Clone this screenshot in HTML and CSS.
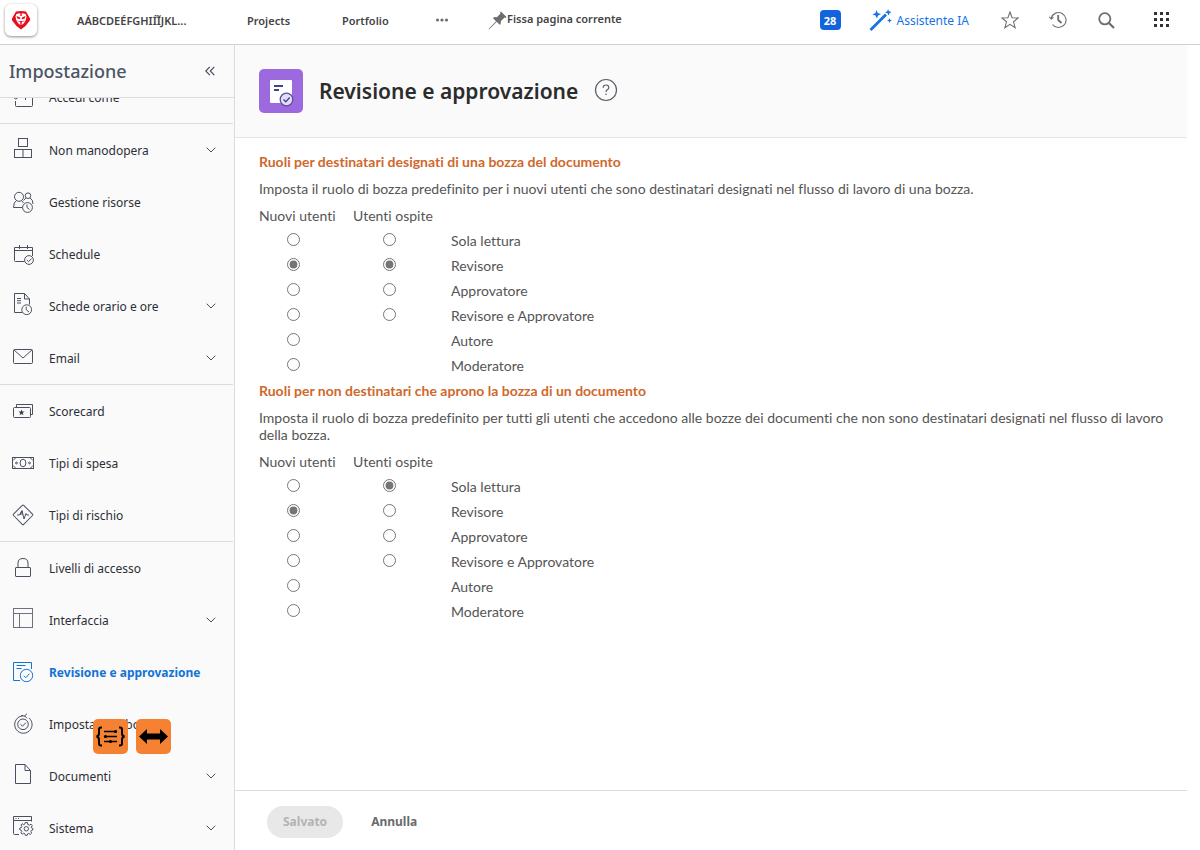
FILE: index.html
```html
<!DOCTYPE html>
<html lang="it">
<head>
<meta charset="utf-8">
<title>Revisione e approvazione</title>
<link rel="stylesheet" href="styles.css">
</head>
<body>
<header class="topbar">
  <a class="logo" href="#" aria-label="Home">
    <svg width="20" height="20" viewBox="0 0 20 20"><path fill="#eb0c22" d="M5 1.5Q10 .3 15 1.5L19 8.500Q19.300 10 18.500 11L14.500 16L10 19.500L5.500 16L1.500 11Q.7 10 1 8.500Z"/><path fill="#fff" d="M5.500 4L8.500 3.300L10 4L11.500 3.300L14.500 4L15.500 6.500L14.800 10L13 13L11.500 14.500H8.500L7 13L5.200 10L4.500 6.500Z"/><path fill="#eb0c22" d="M5.500 6L9.200 7.500V9.300L6.300 8.500ZM14.500 6L10.800 7.500V9.300L13.700 8.500ZM8 11H12L10.700 12.500V14.500H9.300V12.500ZM9.300 3.500H10.700V6H9.300ZM6.500 10L7.500 11V12.500ZM13.500 10L12.500 11V12.500Z"/></svg>
  </a>
  <nav class="topnav" aria-label="Principale">
    <a class="nav-home" href="#">AÁBCDEÉFGHIÍĨJKL...</a>
    <a class="nav-projects" href="#">Projects</a>
    <a class="nav-portfolio" href="#">Portfolio</a>
    <button class="icon-btn nav-more" aria-label="Altro"><svg width="14" height="6" viewBox="0 0 14 6" fill="#6e6e6e"><circle cx="2.500" cy="3" r="1.600"/><circle cx="7" cy="3" r="1.600"/><circle cx="11.500" cy="3" r="1.600"/></svg></button>
    <button class="pin"><svg width="19" height="19" viewBox="0 0 19 19"><path fill="#6e6e6e" d="M13 .5L18.500 6L17.500 7L16.500 6.500L12.800 10.200Q13.300 12.500 12 14L8.700 10.800L1.500 18L.5 18.500L1 17.500L8 10.200L4.800 7Q6.500 5.700 8.800 6.200L12.500 2.500L12 1.500Z"/></svg><span>Fissa pagina corrente</span></button>
  </nav>
  <div class="tools">
    <button class="badge" aria-label="28 notifiche">28</button>
    <button class="assistant"><svg width="23" height="23" viewBox="0 0 23 23" fill="#1473e6"><path d="M.5 20L16 4.500L18 6.500L2.500 22Z"/><path d="M7.500 1L8.700 4L12 5L9 6.500L8 9.500L6.500 6.500L3.500 5.500L6.500 4Z"/><path d="M19 0L20 2.300L22.500 3L20.500 4.200L19.500 6.500L18.500 4.200L16 3.500L18.300 2.300Z"/><path d="M20.500 9L21.200 10.800L23 11.500L21.200 12.200L20.500 14L19.800 12.200L18 11.500L19.800 10.800Z"/></svg><span>Assistente IA</span></button>
    <button class="icon-btn star" aria-label="Preferiti"><svg width="18" height="18" viewBox="0 0 18 18" fill="none" stroke="#6e6e6e" stroke-width="1.100"><path d="M9 1L11.100 6.700L17.200 7L12.500 10.800L14.100 16.700L9 13.400L3.900 16.700L5.500 10.800L.8 7L6.900 6.700Z"/></svg></button>
    <button class="icon-btn recent" aria-label="Recenti"><svg width="18" height="18" viewBox="0 0 18 18" fill="none" stroke="#6e6e6e" stroke-width="1.100"><path d="M2.300 7A7.500 7.500 0 1 1 3.500 13.500"/><path d="M.3 5.800L2.200 8L4.400 6.300" /><path d="M9.200 4V9L12.500 12" stroke-width="1.800"/></svg></button>
    <button class="icon-btn search" aria-label="Cerca"><svg width="17" height="17" viewBox="0 0 17 17" fill="none" stroke="#6e6e6e" stroke-width="1.800"><circle cx="6.800" cy="6.800" r="5.600"/><path d="M11 11L16 16" stroke-width="2.200"/></svg></button>
    <button class="icon-btn apps" aria-label="Applicazioni"><svg width="16" height="16" viewBox="0 0 16 16" fill="#323232"><path d="M0 0h3v3H0zM6 0h3v3H6zM12 0h3v3H12zM0 6h3v3H0zM6 6h3v3H6zM12 6h3v3H12zM0 12h3v3H0zM6 12h3v3H6zM12 12h3v3H12z"/></svg></button>
  </div>
</header>

<div class="layout">
  <aside class="sidebar">
    <div class="side-head">
      <h2>Impostazione</h2>
      <button class="icon-btn" aria-label="Comprimi"><svg width="10" height="10" viewBox="0 0 10 10" fill="none" stroke="#4b5060" stroke-width="1.200"><path d="M4.800 .8L.8 5L4.800 9.200M9.300 .8L5.300 5L9.300 9.200"/></svg></button>
    </div>
    <nav class="side-list" aria-label="Impostazione">
      <div class="group group-scrolled">
        <a class="item" href="#"><svg class="ico" viewBox="0 0 24 24"><path d="M4.500 18V22.500Q4.500 23.500 5.500 23.500H20.500Q21.500 23.500 21.500 22.500V14H16M2.500 14Q4.500 18 7.500 14M14.500 14V17"/></svg><span>Accedi come</span></a>
      </div>
      <div class="group">
        <a class="item" href="#"><svg class="ico" viewBox="0 0 24 24"><rect x="7.500" y="2.500" width="9" height="8"/><rect x="3.500" y="13.500" width="17" height="8"/><path d="M12 13.500V21.500"/></svg><span>Non manodopera</span><svg class="chev" viewBox="0 0 10 6"><path d="M.7 .7L5 5L9.300 .7"/></svg></a>
        <a class="item" href="#"><svg class="ico" viewBox="0 0 24 24"><circle cx="8" cy="8.800" r="4.500"/><path d="M5.500 12.500Q2.500 14 2.500 19.500H11.200M10.500 12.500L12.500 15"/><circle cx="17" cy="7.700" r="2.800"/><path d="M14.800 10L12.500 12.500M19 10Q22 11.500 22 16"/><circle cx="16.500" cy="19.500" r="4.900"/><path d="M16 16.500V19.500L18.500 21.500"/></svg><span>Gestione risorse</span></a>
        <a class="item" href="#"><svg class="ico" viewBox="0 0 24 24"><path d="M13.500 21.500H4.500Q3.500 21.500 3.500 20.500V7.500H21.500V16M3.500 10.500H21.500M8.500 5V9M16.500 5V9"/><circle cx="18" cy="20" r="4.400"/><path d="M15.800 20L17.500 21.700L20.500 18.600"/></svg><span>Schedule</span></a>
        <a class="item" href="#"><svg class="ico" viewBox="0 0 24 24"><path d="M11 20.500H3.500V1.500H13.500L18.500 7V12.500M13.500 1.500V7H18.500M6 6.500H10M6 8.700H10M6 11H10"/><circle cx="15.700" cy="17.700" r="4.900"/><path d="M15.200 14.700V17.700L18 20"/></svg><span>Schede orario e ore</span><svg class="chev" viewBox="0 0 10 6"><path d="M.7 .7L5 5L9.300 .7"/></svg></a>
        <a class="item" href="#"><svg class="ico" viewBox="0 0 24 24"><rect x="2.500" y="5.500" width="19" height="14" rx="1"/><path d="M3 6L12 14L21 6"/></svg><span>Email</span><svg class="chev" viewBox="0 0 10 6"><path d="M.7 .7L5 5L9.300 .7"/></svg></a>
      </div>
      <div class="group">
        <a class="item" href="#"><svg class="ico" viewBox="0 0 24 24"><rect x="2.500" y="10.500" width="17" height="10" rx="1"/><path d="M5.500 10.500V7.500H21.500V17.500H19.500"/><path fill="#3b4150" stroke="none" d="M10.500 12.500L11.300 14.600H13.500L11.800 16L12.400 18.200L10.500 16.900L8.600 18.200L9.200 16L7.500 14.600H9.700Z"/></svg><span>Scorecard</span></a>
        <a class="item" href="#"><svg class="ico" viewBox="0 0 24 24"><rect x="1.500" y="8.500" width="21" height="11"/><ellipse cx="12" cy="14" rx="2.900" ry="3.800"/><circle cx="5.500" cy="14" r=".9"/><circle cx="18.500" cy="14" r=".9"/><path d="M2 11.500L4.500 9M22 11.500L19.500 9M2 16.500L4.500 19M22 16.500L19.500 19"/></svg><span>Tipi di spesa</span></a>
        <a class="item" href="#"><svg class="ico" viewBox="0 0 24 24"><rect x="4.800" y="6.600" width="14.400" height="14.400" rx="1" transform="rotate(45 12 13.800)"/><path d="M6 14H8.500L11 9.500L13 18L15 12.500L16 14H18M9 14L11 10V14"/></svg><span>Tipi di rischio</span></a>
      </div>
      <div class="group">
        <a class="item" href="#"><svg class="ico" viewBox="0 0 24 24"><rect x="4.500" y="13.500" width="15" height="9" rx=".5"/><path d="M7 13.500V9Q7 4.500 12 4.500Q17 4.500 17 9V13.500"/></svg><span>Livelli di accesso</span></a>
        <a class="item" href="#"><svg class="ico" viewBox="0 0 24 24" stroke-opacity=".8"><rect x="2.500" y="2.500" width="19" height="19"/><path d="M2.500 7.500H21.500M8.500 7.500V21.500"/></svg><span>Interfaccia</span><svg class="chev" viewBox="0 0 10 6"><path d="M.7 .7L5 5L9.300 .7"/></svg></a>
        <a class="item active" href="#" aria-current="page"><svg class="ico" viewBox="0 0 24 24"><path d="M9 22.500H2.500V4.500H20.500V11M5.500 7.500H14.500M5.500 10.500H10.500"/><circle cx="15.500" cy="17.500" r="6.200"/><path d="M12.800 17.700L14.800 19.700L18.500 15.700"/></svg><span>Revisione e approvazione</span></a>
        <a class="item" href="#"><svg class="ico" viewBox="0 0 24 24"><path d="M14 6A8.700 8.700 0 1 0 18 7.900M16 3.700L13.700 5.900L16 8.300M10 5.700L12 5.500"/><circle cx="12" cy="14.300" r="5.300"/><path d="M9.500 14.300L11.500 16.200L14.800 12.700"/></svg><span>Impostazioni bozza</span></a>
        <a class="item" href="#"><svg class="ico" viewBox="0 0 24 24"><path d="M4.500 2.500H14L19.500 8.500V21.500H4.500ZM14 2.500V8.500H19.500"/></svg><span>Documenti</span><svg class="chev" viewBox="0 0 10 6"><path d="M.7 .7L5 5L9.300 .7"/></svg></a>
        <a class="item" href="#"><svg class="ico" viewBox="0 0 24 24"><path d="M8 20.500H3.500Q2.500 20.500 2.500 19.500V2.500H20.500V7.500M2.500 6.500H20.500M4.500 4.500H5.500M7 4.500H8"/><circle cx="15.300" cy="14.800" r="2.200"/><path d="M14.300 8.500H16.300L16.800 10.500L18.300 11.200L20 10.100L21.300 11.600L20.200 13.200L20.600 14L21.800 14.300V16L20.200 16.600L19.800 17.600L20.600 19.200L19.300 20.400L17.600 19.400L16.700 19.800L16.200 21.300H14.300L13.800 19.700L12.700 19.200L11.200 20.200L9.900 18.900L10.800 17.400L10.400 16.400L8.800 15.900V14L10.400 13.500L10.900 12.400L9.900 11L11.200 9.700L12.700 10.600L13.700 10.200Z"/></svg><span>Sistema</span><svg class="chev" viewBox="0 0 10 6"><path d="M.7 .7L5 5L9.300 .7"/></svg></a>
      </div>
    </nav>
  </aside>

  <main class="main">
    <div class="page-head">
      <svg class="page-ico" width="44" height="44" viewBox="0 0 44 44"><rect width="44" height="44" rx="5" fill="#9c6ade"/><rect x="11" y="11" width="22" height="23" rx="1" fill="#fff"/><path d="M15 17H24M15 21H20" stroke="#43438c" stroke-width="2"/><circle cx="27.500" cy="30.500" r="6.300" fill="#e6dcf7" stroke="#5b4f9e" stroke-width="1.300"/><path d="M24.500 30.500L26.800 32.800L30.700 28.500" fill="none" stroke="#43438c" stroke-width="1.300"/></svg>
      <h1>Revisione e approvazione</h1>
      <button class="icon-btn help" aria-label="Guida"><svg width="24" height="24" viewBox="0 0 24 24" fill="none" stroke="#5a5e6b" stroke-width="1.200"><circle cx="12" cy="12" r="10.500"/><path d="M9.200 9.800Q9.200 7 12 7Q14.800 7 14.800 9.500Q14.800 11 13.200 11.800Q12 12.500 12 14M12 15.500V17"/></svg></button>
    </div>
    <form class="content">
      <section>
        <h3 id="s1">Ruoli per destinatari designati di una bozza del documento</h3>
        <p>Imposta il ruolo di bozza predefinito per i nuovi utenti che sono destinatari designati nel flusso di lavoro di una bozza.</p>
        <table aria-labelledby="s1">
          <thead><tr><th scope="col">Nuovi utenti</th><th scope="col">Utenti ospite</th><td></td></tr></thead>
          <tbody>
          <tr><td><input type="radio" name="a" aria-label="Nuovi utenti: Sola lettura"></td><td><input type="radio" name="b" aria-label="Utenti ospite: Sola lettura"></td><th scope="row">Sola lettura</th></tr>
          <tr><td><input type="radio" name="a" checked aria-label="Nuovi utenti: Revisore"></td><td><input type="radio" name="b" checked aria-label="Utenti ospite: Revisore"></td><th scope="row">Revisore</th></tr>
          <tr><td><input type="radio" name="a" aria-label="Nuovi utenti: Approvatore"></td><td><input type="radio" name="b" aria-label="Utenti ospite: Approvatore"></td><th scope="row">Approvatore</th></tr>
          <tr><td><input type="radio" name="a" aria-label="Nuovi utenti: Revisore e Approvatore"></td><td><input type="radio" name="b" aria-label="Utenti ospite: Revisore e Approvatore"></td><th scope="row">Revisore e Approvatore</th></tr>
          <tr><td><input type="radio" name="a" aria-label="Nuovi utenti: Autore"></td><td></td><th scope="row">Autore</th></tr>
          <tr><td><input type="radio" name="a" aria-label="Nuovi utenti: Moderatore"></td><td></td><th scope="row">Moderatore</th></tr>
          </tbody>
        </table>
      </section>
      <section>
        <h3 id="s2">Ruoli per non destinatari che aprono la bozza di un documento</h3>
        <p>Imposta il ruolo di bozza predefinito per tutti gli utenti che accedono alle bozze dei documenti che non sono destinatari designati nel flusso di lavoro della bozza.</p>
        <table aria-labelledby="s2">
          <thead><tr><th scope="col">Nuovi utenti</th><th scope="col">Utenti ospite</th><td></td></tr></thead>
          <tbody>
          <tr><td><input type="radio" name="c" aria-label="Nuovi utenti: Sola lettura"></td><td><input type="radio" name="d" checked aria-label="Utenti ospite: Sola lettura"></td><th scope="row">Sola lettura</th></tr>
          <tr><td><input type="radio" name="c" checked aria-label="Nuovi utenti: Revisore"></td><td><input type="radio" name="d" aria-label="Utenti ospite: Revisore"></td><th scope="row">Revisore</th></tr>
          <tr><td><input type="radio" name="c" aria-label="Nuovi utenti: Approvatore"></td><td><input type="radio" name="d" aria-label="Utenti ospite: Approvatore"></td><th scope="row">Approvatore</th></tr>
          <tr><td><input type="radio" name="c" aria-label="Nuovi utenti: Revisore e Approvatore"></td><td><input type="radio" name="d" aria-label="Utenti ospite: Revisore e Approvatore"></td><th scope="row">Revisore e Approvatore</th></tr>
          <tr><td><input type="radio" name="c" aria-label="Nuovi utenti: Autore"></td><td></td><th scope="row">Autore</th></tr>
          <tr><td><input type="radio" name="c" aria-label="Nuovi utenti: Moderatore"></td><td></td><th scope="row">Moderatore</th></tr>
          </tbody>
        </table>
      </section>
    </form>
    <footer class="foot">
      <button class="save" disabled>Salvato</button>
      <button class="cancel">Annulla</button>
    </footer>
  </main>
</div>

<div class="floaters">
  <button aria-label="Variabili"><svg width="35" height="35" viewBox="0 0 35 35" fill="none" stroke="#000" stroke-width="2"><path d="M9 8.500H8Q6 8.500 6 10.500V14.500Q6 17 3.500 17.500Q6 18 6 20.500V24.500Q6 26.500 8 26.500H9M26 8.500H27Q29 8.500 29 10.500V14.500Q29 17 31.500 17.500Q29 18 29 20.500V24.500Q29 26.500 27 26.500H26"/><path d="M11 12.500H24M11 17.500H24M11 22.500H24" stroke-width="1.600"/><g fill="#000" stroke="none"><circle cx="22.500" cy="12.500" r="1.600"/><circle cx="12.500" cy="17.500" r="1.600"/><circle cx="17.500" cy="22.500" r="1.600"/></g></svg></button>
  <button aria-label="Espandi"><svg width="35" height="35" viewBox="0 0 35 35"><path d="M3 17.500L11 10V14.500H24V10L32 17.500L24 25V20.500H11V25Z"/></svg></button>
</div>
</body>
</html>
```
FILE: styles.css
```css
* { box-sizing: border-box; }

body {
  margin: 0;
  height: 100vh;
  display: flex;
  flex-direction: column;
  overflow: hidden;
  background: #fff;
  color: #323232;
  font-family: "Noto Sans", sans-serif;
  font-size: 13px;
}

a { color: inherit; text-decoration: none; }
h1, h2, h3, p { margin: 0; }
svg { display: block; flex: none; }

button {
  margin: 0;
  padding: 0;
  border: 0;
  background: none;
  color: inherit;
  font: inherit;
}

/* Top bar */
.topbar {
  flex: none;
  height: 45px;
  display: flex;
  align-items: center;
  justify-content: space-between;
  padding: 0 30px 4px 5px;
  border-bottom: 1px solid #d0d0d0;
}
.logo {
  width: 32px;
  height: 32px;
  display: grid;
  place-items: center;
  border-radius: 6px;
  background: #fff;
  box-shadow: 0 1px 3px rgba(0, 0, 0, .45);
}
.topnav {
  flex: 1;
  display: flex;
  align-items: center;
  margin-left: 40px;
  font-size: 11px;
  font-weight: 600;
  color: #444;
}
.nav-home { width: 170px; }
.nav-projects { width: 95px; }
.nav-portfolio { width: 93px; }
.nav-more { margin-right: 39px; }
.pin { display: flex; align-items: flex-start; }
.tools { display: flex; align-items: center; }
.badge {
  width: 21px;
  height: 20px;
  margin-right: 28px;
  border-radius: 4px;
  background: #1264dc;
  color: #fff;
  font-size: 11px;
  font-weight: 700;
}
.assistant {
  display: flex;
  align-items: center;
  gap: 5px;
  margin-right: 32px;
  color: #1473e6;
  font-size: 12px;
}
.star { margin-right: 30px; }
.recent { margin-right: 31px; }
.search { margin-right: 39px; }

/* Layout */
.layout { flex: 1; min-height: 0; display: flex; }

.sidebar {
  flex: none;
  width: 235px;
  display: flex;
  flex-direction: column;
  border-right: 1px solid #dcdcdc;
  background: #fafafa;
}
.side-head {
  flex: none;
  height: 53px;
  display: flex;
  align-items: center;
  justify-content: space-between;
  padding: 0 19px 0 9px;
  border-bottom: 1px solid #dcdcdc;
}
.side-head h2 {
  color: #4b5563;
  font-size: 18px;
  font-weight: 500;
}
.side-list { flex: 1; min-height: 0; overflow: hidden; margin-right: 1px; }
.group + .group { border-top: 1px solid #dcdcdc; }
.group-scrolled { margin-top: -27px; }
.item {
  height: 52px;
  display: flex;
  align-items: center;
  gap: 14px;
  padding: 0 17px 0 11px;
  font-size: 12px;
  color: #2c2f36;
}
.item span { flex: 1; white-space: nowrap; }
.ico {
  width: 24px;
  height: 24px;
  margin-bottom: 4px;
  overflow: visible;
  fill: none;
  stroke: #4b5060;
}
.chev { width: 10px; height: 6px; fill: none; stroke: #4b5060; }
.active { color: #1473d6; font-weight: 700; }
.active .ico { stroke: #1473d6; }

/* Main */
.main {
  flex: 1;
  min-width: 0;
  display: flex;
  flex-direction: column;
  margin-right: 13px;
}
.page-head {
  flex: none;
  height: 93px;
  display: flex;
  align-items: center;
  gap: 16px;
  padding: 0 24px;
  border-bottom: 1px solid #e6e6e6;
  background: #fafafa;
}
.page-head h1 {
  color: #2c2c2c;
  font-size: 21px;
  font-weight: 600;
}
.help { margin-bottom: 2px; }

.content {
  flex: 1;
  min-height: 0;
  overflow: hidden;
  padding: 15px 20px 0 24px;
  color: #555;
  font-family: Lato, sans-serif;
  font-size: 14px;
  font-variant-ligatures: none;
  line-height: 17px;
}
.content section + section { margin-top: 8px; }
.content h3 {
  color: #cf682c;
  font-size: 14px;
  font-weight: 700;
}
.content p { margin: 10px 0; }
.content table { border-collapse: collapse; }
.content th, .content td { padding: 0; font-weight: 400; text-align: left; }
.content thead th { width: 94px; height: 17px; }
.content thead th + th { width: 98px; }
.content tbody tr { height: 25px; }
.content tbody th { padding-top: 8px; vertical-align: top; }
.content tbody td { padding: 9px 0 0 28px; vertical-align: top; }
.content tbody td + td { padding-left: 30px; }
.content input {
  display: block;
  width: 13px;
  height: 13px;
  margin: 0;
  accent-color: #757575;
}

.foot {
  flex: none;
  height: 60px;
  display: flex;
  align-items: center;
  gap: 28px;
  padding: 2px 32px 0;
  border-top: 1px solid #dcdcdc;
  font-size: 12px;
  font-weight: 700;
}
.save {
  height: 32px;
  padding: 0 16px;
  border-radius: 16px;
  background: #e8e8e8;
  color: #b3b3b3;
}
.cancel { color: #6a6a6a; }

/* Floating extension buttons */
.floaters {
  position: absolute;
  left: 93px;
  top: 719px;
  display: flex;
  gap: 8px;
}
.floaters button { border-radius: 5px; background: #f58233; }
```
